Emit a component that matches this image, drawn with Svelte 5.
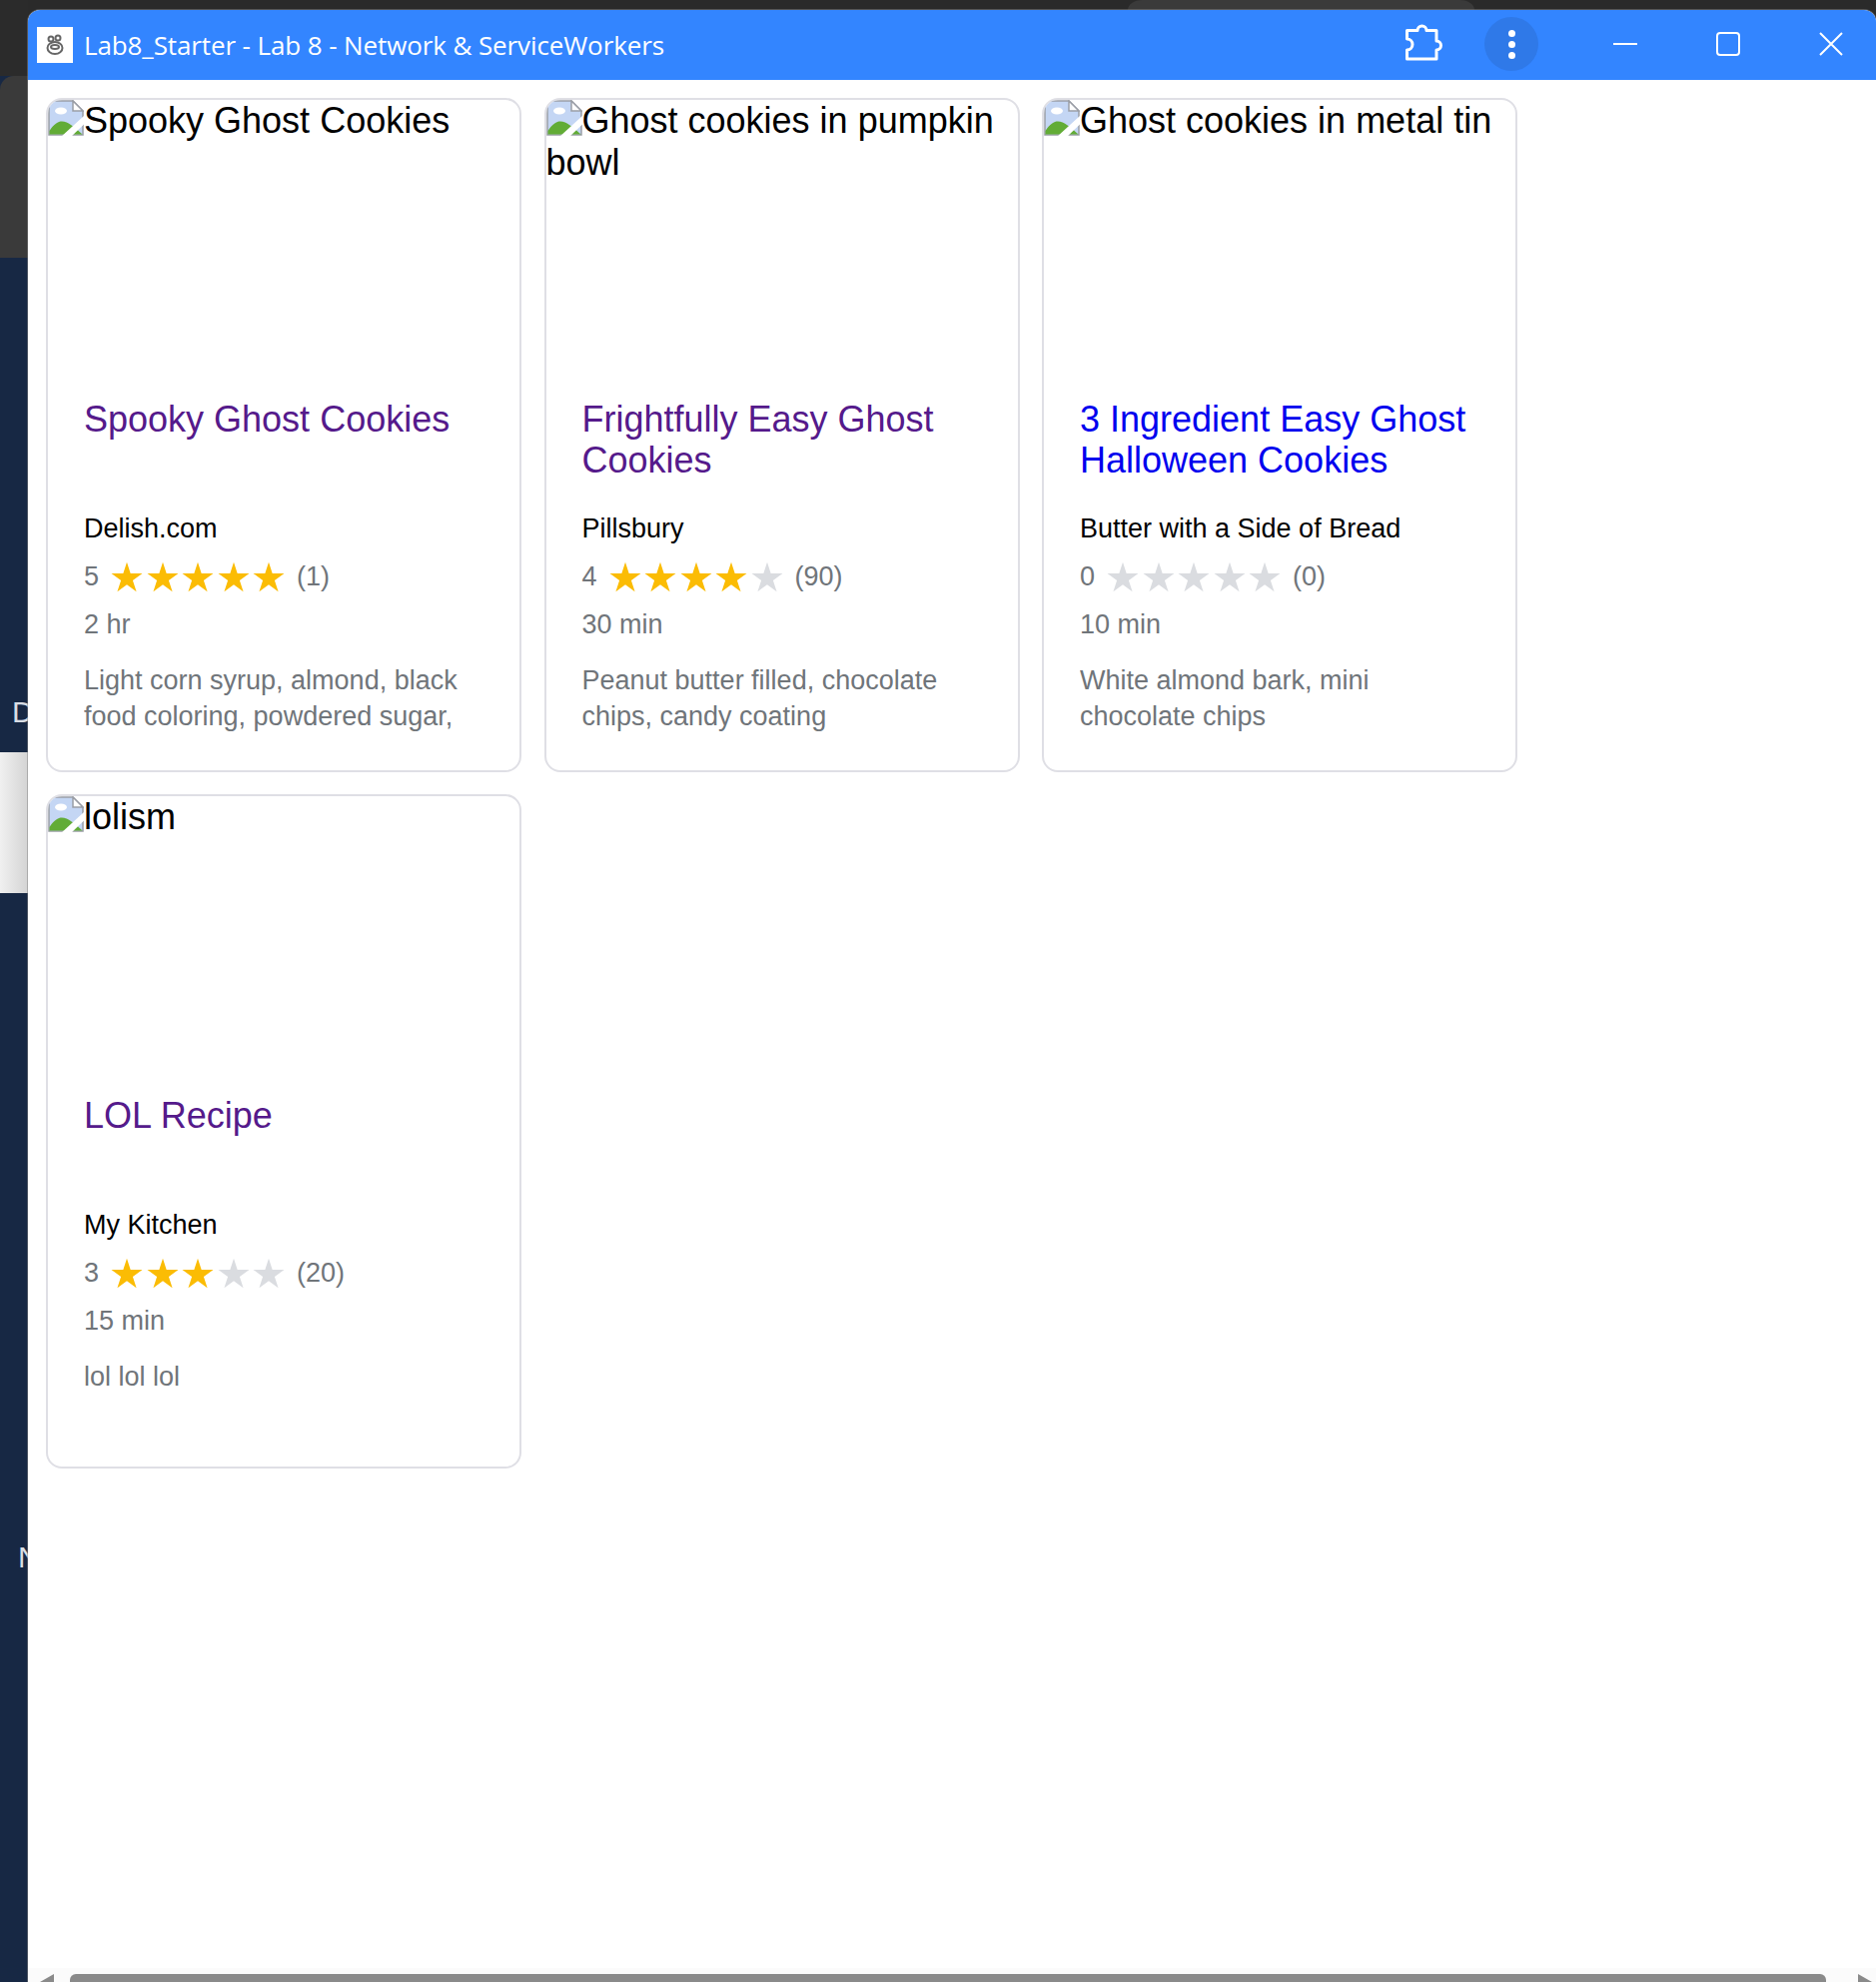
<script lang="ts">
	interface Recipe {
		alt: string;
		title: string;
		visited: boolean;
		org: string;
		rating: number;
		count: number;
		time: string;
		ingredients: string;
	}

	const recipes: Recipe[] = [
		{
			alt: 'Spooky Ghost Cookies',
			title: 'Spooky Ghost Cookies',
			visited: true,
			org: 'Delish.com',
			rating: 5,
			count: 1,
			time: '2 hr',
			ingredients: 'Light corn syrup, almond, black food coloring, powdered sugar,'
		},
		{
			alt: 'Ghost cookies in pumpkin bowl',
			title: 'Frightfully Easy Ghost Cookies',
			visited: true,
			org: 'Pillsbury',
			rating: 4,
			count: 90,
			time: '30 min',
			ingredients: 'Peanut butter filled, chocolate chips, candy coating'
		},
		{
			alt: 'Ghost cookies in metal tin',
			title: '3 Ingredient Easy Ghost Halloween Cookies',
			visited: false,
			org: 'Butter with a Side of Bread',
			rating: 0,
			count: 0,
			time: '10 min',
			ingredients: 'White almond bark, mini chocolate chips'
		},
		{
			alt: 'lolism',
			title: 'LOL Recipe',
			visited: true,
			org: 'My Kitchen',
			rating: 3,
			count: 20,
			time: '15 min',
			ingredients: 'lol lol lol'
		}
	];

	const starPoints =
		'12,1.2 14.59,9.14 22.94,9.15 16.18,14.06 18.76,22 12,17.1 5.24,22 7.82,14.06 1.06,9.15 9.41,9.14';
</script>

<div class="desktop">
	<div class="back-tab"></div>

	<div class="backdrop">
		<div class="back-top"></div>
		<div class="back-gray"></div>
		<div class="back-navy">
			<span class="cut cut-d">D</span>
		</div>
		<div class="back-light"></div>
		<div class="back-navy tall">
			<span class="cut cut-n">N</span>
		</div>
	</div>

	<div class="window">
		<header class="titlebar">
			<div class="favicon">
				<svg viewBox="0 0 24 24" width="24" height="24" fill="none" stroke="#666" stroke-width="2">
					<ellipse cx="12" cy="15" rx="7.5" ry="6"></ellipse>
					<ellipse cx="12" cy="14" rx="4" ry="2"></ellipse>
					<circle cx="8" cy="6" r="2.5"></circle>
					<circle cx="15" cy="5" r="2.5"></circle>
				</svg>
			</div>
			<span class="app-title">Lab8_Starter - Lab 8 - Network &amp; ServiceWorkers</span>
			<div class="controls">
				<svg class="puzzle" viewBox="0 2 40 40" width="40" height="40" fill="none" stroke="#fff" stroke-width="3" stroke-linejoin="round">
					<path d="M3.5 8.5H14a4.5 4.5 0 0 1 9 0H33V19a4.500 4.500 0 0 1 0 9v9H3.500V28a5.500 5.500 0 0 0 0-11z"></path>
				</svg>
				<div class="menu">
					<i></i><i></i><i></i>
				</div>
				<svg class="win-icon minimize" viewBox="0 0 24 24" width="24" height="24" stroke="#fff" stroke-width="2">
					<path d="M0 12h24"></path>
				</svg>
				<svg class="win-icon maximize" viewBox="0 0 24 24" width="24" height="24" fill="none" stroke="#fff" stroke-width="2">
					<rect x="1" y="1" width="22" height="22" rx="3"></rect>
				</svg>
				<svg class="win-icon close" viewBox="0 0 24 24" width="24" height="24" stroke="#fff" stroke-width="2">
					<path d="M1 1l22 22M23 1L1 23"></path>
				</svg>
			</div>
		</header>

		<main class="content">
			<div class="grid">
				{#each recipes as recipe}
					<article class="card">
						<div class="thumb">
							<svg class="broken" viewBox="0 0 36 36" width="36" height="36">
								<path d="M1 1h24l10 10v24H1z" fill="#c4d6f4" stroke="#9a9ea6" stroke-width="1.5"></path>
								<path d="M25 1v10h10z" fill="#fff" stroke="#9a9ea6" stroke-width="1.5"></path>
								<ellipse cx="13" cy="11" rx="6" ry="3.5" fill="#fff"></ellipse>
								<path d="M1.5 34.5V31C6 24 10 21.500 14 21.500c6 0 13 6 20.500 13z" fill="#62ac36"></path>
								<path d="M13 37L36 16v8.500L23 37z" fill="#fff"></path>
							</svg><span class="alt">{recipe.alt}</span>
						</div>
						<div class="body">
							<h3 class="title" class:visited={recipe.visited}>{recipe.title}</h3>
							<p class="org">{recipe.org}</p>
							<div class="rating">
								<span>{recipe.rating}</span>
								<span class="stars">
									{#each [1, 2, 3, 4, 5] as n}
										<svg viewBox="0 0 24 24" width="34" height="34" class:on={n <= recipe.rating}>
											<polygon points={starPoints}></polygon>
										</svg>
									{/each}
								</span>
								<span>({recipe.count})</span>
							</div>
							<p class="time">{recipe.time}</p>
							<p class="ingredients">{recipe.ingredients}</p>
						</div>
					</article>
				{/each}
			</div>
		</main>

		<div class="scrollbar">
			<span class="arrow left"></span>
			<div class="thumb-bar"></div>
			<span class="arrow right"></span>
		</div>
	</div>
</div>

<style>
	:global(body) {
		margin: 0;
		background: #2a2a2a;
	}

	.desktop {
		position: relative;
		display: flex;
		width: 1878px;
		height: 1984px;
		overflow: hidden;
		background: #2a2a2a;
		font-family: "Liberation Sans", Arial, sans-serif;
	}

	/* another window peeking out above the titlebar */
	.back-tab {
		position: absolute;
		left: 1129px;
		top: 0;
		width: 347px;
		height: 10px;
		border-radius: 0 0 0 0 / 0;
		border-top-left-radius: 14px 10px;
		border-top-right-radius: 14px 10px;
		background: #3a3a3a;
	}

	.backdrop {
		flex: 0 0 28px;
		display: flex;
		flex-direction: column;
		background: #172844;
	}

	.back-top {
		flex: 0 0 76px;
		background: #2b2b2b;
	}

	.back-gray {
		flex: 0 0 182px;
		background: #3a3a3a;
		border-top-left-radius: 14px;
	}

	.back-navy {
		flex: 0 0 495px;
		position: relative;
		overflow: hidden;
		background: #172844;
	}

	.back-navy.tall {
		flex: 1;
	}

	.back-light {
		flex: 0 0 141px;
		background: linear-gradient(to right, #f0f0f0, #d4d4d4);
	}

	.cut {
		position: absolute;
		color: #d8dde4;
		font-size: 30px;
	}

	.cut-d {
		left: 12px;
		top: 438px;
	}

	.cut-n {
		left: 18px;
		top: 648px;
	}

	.window {
		position: relative;
		flex: 1;
		display: flex;
		flex-direction: column;
		margin-top: 10px;
		background: #fff;
		border-radius: 12px 12px 0 0;
		overflow: hidden;
		box-shadow: 0 0 0 1px rgba(130, 130, 130, 0.5);
	}

	.titlebar {
		flex: 0 0 70px;
		display: flex;
		align-items: center;
		background: #3385ff;
		color: #fff;
	}

	.favicon {
		display: flex;
		align-items: center;
		justify-content: center;
		width: 36px;
		height: 36px;
		margin-left: 9px;
		background: #fff;
	}

	.app-title {
		margin-left: 11px;
		font-family: "Open Sans", "Noto Sans", sans-serif;
		font-size: 26px;
		letter-spacing: -0.11px;
	}

	.controls {
		display: flex;
		align-items: center;
		margin-left: auto;
		margin-bottom: 2px;
	}

	.puzzle {
		margin-right: 41px;
	}

	.menu {
		display: flex;
		flex-direction: column;
		align-items: center;
		justify-content: center;
		gap: 4px;
		width: 54px;
		height: 54px;
		border-radius: 50%;
		background: #2f79e8;
	}

	.menu i {
		width: 7px;
		height: 7px;
		border-radius: 50%;
		background: #fff;
	}

	.win-icon {
		flex: none;
	}

	.minimize {
		margin-left: 75px;
	}

	.maximize {
		margin-left: 79px;
	}

	.close {
		margin: 0 33px 0 79px;
	}

	.content {
		flex: 1;
		padding: 18px;
		min-height: 0;
	}

	.grid {
		display: grid;
		grid-template-columns: repeat(auto-fill, 476px);
		gap: 22px 22.5px;
	}

	.card {
		display: flex;
		flex-direction: column;
		box-sizing: border-box;
		height: 675px;
		border: 2px solid #dfdfe5;
		border-radius: 16px;
		overflow: hidden;
	}

	.thumb {
		flex: 0 0 288px;
		font-size: 36px;
		line-height: 42px;
		color: #000;
	}

	.broken {
		vertical-align: top;
		margin-bottom: -6px;
	}

	.body {
		padding: 0 36px;
	}

	.title {
		height: 92px;
		margin: 10.5px 0 0;
		font-size: 36px;
		font-weight: 400;
		line-height: 41px;
		color: #0000ee;
	}

	.title.visited {
		color: #551a8b;
	}

	.org {
		margin: 22px 0 0;
		font-size: 27px;
		line-height: 32px;
		color: #000;
	}

	.rating {
		display: flex;
		align-items: center;
		gap: 8px;
		height: 38px;
		margin-top: 14px;
		font-size: 27px;
		color: #70757a;
	}

	.stars {
		display: flex;
		margin: 0 3px;
		gap: 1.5px;
	}

	.stars svg {
		fill: #dadce0;
	}

	.stars svg.on {
		fill: #fbbc04;
	}

	.time {
		margin: 9.5px 0 0;
		font-size: 27px;
		line-height: 38px;
		color: #70757a;
	}

	.ingredients {
		display: -webkit-box;
		-webkit-box-orient: vertical;
		-webkit-line-clamp: 2;
		margin: 19px 0 0;
		overflow: hidden;
		font-size: 27px;
		line-height: 36px;
		color: #70757a;
	}

	.scrollbar {
		position: relative;
		flex: 0 0 14px;
		background: #fbfbfb;
	}

	.thumb-bar {
		position: absolute;
		left: 42px;
		right: 50px;
		top: 6px;
		height: 8px;
		border-radius: 6px 6px 0 0;
		background: #8a8a8a;
	}

	.arrow {
		position: absolute;
		top: 6px;
		width: 0;
		height: 0;
		border-bottom: 8px solid #8a8a8a;
	}

	.arrow.left {
		left: 12px;
		border-left: 14px solid transparent;
	}

	.arrow.right {
		right: 4px;
		border-right: 14px solid transparent;
	}
</style>
